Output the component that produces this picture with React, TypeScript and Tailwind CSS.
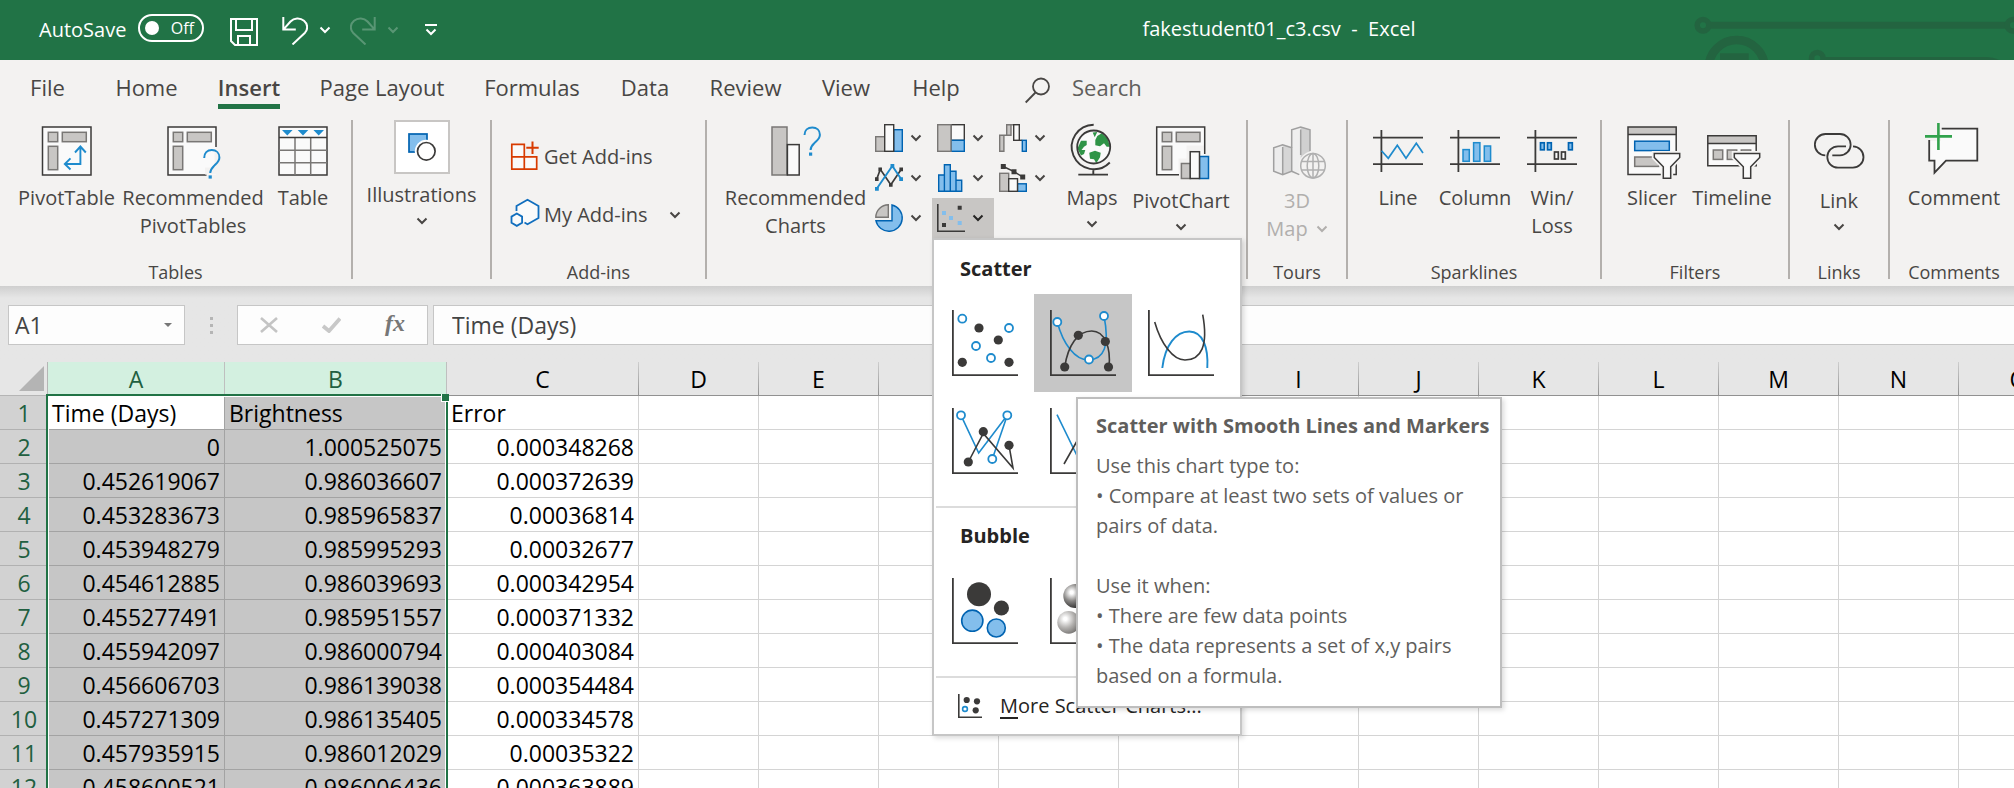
import type { ReactNode } from "react";

const INK = "#3b3a39";
const GREY = "#797775";
const GREY_FILL = "#c8c6c4";
const PAPER = "#fafafa";
const BLUE = "#1e8bcd";
const BLUE_LINE = "#0063b1";
const BLUE_FILL = "#83beec";
const RIBBON = "#f3f2f1";

function Chevron({ className = "" }: { className?: string }) {
  return (
    <svg className={`h-2 w-3 shrink-0 ${className}`} viewBox="0 0 12 8" fill="none" stroke="currentColor" strokeWidth="2" aria-hidden="true">
      <path d="M1.5 1.5L6 6l4.5-4.5" />
    </svg>
  );
}

function Large({ children }: { children: ReactNode }) {
  return (
    <svg className="h-14 w-14 shrink-0 overflow-visible" viewBox="0 0 56 56" fill="none" strokeWidth="1.5" aria-hidden="true">
      {children}
    </svg>
  );
}

function Small({ children }: { children: ReactNode }) {
  return (
    <svg className="h-7 w-7 shrink-0 overflow-visible" viewBox="0 0 28 28" fill="none" strokeWidth="1.4" aria-hidden="true">
      {children}
    </svg>
  );
}

function PivotTableIcon() {
  return (
    <Large>
      <rect x="3.5" y="1" width="48.5" height="48" fill={PAPER} stroke={INK} />
      <g fill={GREY_FILL} stroke={GREY}>
        <rect x="9.3" y="6.3" width="9.4" height="9.4" />
        <rect x="23.3" y="6.3" width="24" height="9.4" />
        <rect x="9.3" y="20.3" width="9.4" height="23.4" />
      </g>
      <path d="M41.4 21v17H26M36 26.5l5.4-6 5.4 6M31.5 32.3l-5.7 5.7 5.7 5.5" stroke={BLUE} strokeWidth="1.9" />
    </Large>
  );
}

function RecommendedPivotIcon() {
  return (
    <Large>
      <path d="M3 1h48v48H3z" fill={PAPER} />
      <path d="M41.5 49H3V1h48v20" stroke={INK} />
      <g fill={GREY_FILL} stroke={GREY}>
        <rect x="8.3" y="6.3" width="9.4" height="9.4" />
        <rect x="22.3" y="6.3" width="24" height="9.4" />
        <rect x="8.3" y="20.3" width="9.4" height="23.4" />
      </g>
      <path d="M40 45h13V26" stroke={RIBBON} strokeWidth="7" />
      <path d="M39.2 32c0-5 3-7.9 7.6-7.9 4.5 0 7.6 3 7.6 7.4 0 3.8-2.4 5.5-4.9 7.9-2.5 2.5-4.3 4-4.3 7.6" stroke={BLUE} strokeWidth="2" />
      <rect x="43.6" y="49.4" width="3.2" height="3.2" fill={BLUE} />
    </Large>
  );
}

function TableIcon() {
  return (
    <Large>
      <rect x="4" y="1" width="48" height="48" fill={PAPER} stroke={INK} />
      <path d="M4 24.3h48M4 36.7h48M20 12v37M35.7 12v37" stroke={GREY} />
      <path d="M4 11.5h48" stroke={INK} />
      <path d="M7 4h10.6l-5.3 5.5zM22.7 4h10.6L28 9.5zM38.4 4H49l-5.3 5.5z" fill={BLUE} />
    </Large>
  );
}

function RecommendedChartsIcon() {
  return (
    <Large>
      <rect x="4" y="1" width="15" height="48" fill={GREY_FILL} stroke={GREY} />
      <rect x="19.4" y="18.6" width="11.8" height="30.4" fill={PAPER} stroke={INK} />
      <path d="M36.5 9c0-4.6 3.3-7.4 7.8-7.4 4.4 0 7.6 2.8 7.6 7.2 0 3.8-2.5 5.4-5 7.8-2.4 2.3-4.3 3.7-4.3 7.4" stroke={BLUE} strokeWidth="2" />
      <rect x="41" y="26.5" width="3.2" height="3.2" fill={BLUE} />
    </Large>
  );
}

function GlobeIcon() {
  return (
    <Large>
      <circle cx="29.7" cy="21" r="16.5" fill={PAPER} />
      <g fill="#2f9447">
        <path d="M17 14.7h5.7V19L20 20.7 17.5 24h3.8L20 28l-3 1.5-3.5-7z" />
        <path d="M28.7 6.500l4.600-.4-2.600 5.200z" />
        <path d="M33.3 10l4.400-2.700 5.600 5 2.900 8.400h-3.500l-2.700-3.400-4 3-4.700-1V14z" />
        <path d="M25.3 26.700l5.700-2 5.700 2-.7 4.600-3.700 6-2.300-4-4-.6z" />
      </g>
      <circle cx="29.7" cy="21" r="16.5" stroke={INK} strokeWidth="1.8" />
      <path d="M29.7-1.2A22.2 22.2 0 1 0 45.8 36.500M29.300 43.400v5.200M14.300 48.600H44" stroke={INK} strokeWidth="1.9" />
    </Large>
  );
}

function PivotChartIcon() {
  return (
    <Large>
      <path d="M4 1h48v48H4z" fill={PAPER} />
      <path d="M28 57V35h8V22h20" stroke={RIBBON} strokeWidth="5" />
      <path d="M26 48.700H3.700V1h48v27" stroke={INK} />
      <g fill={GREY_FILL} stroke={GREY}>
        <rect x="9.3" y="6.3" width="9.4" height="9.4" />
        <rect x="23.3" y="6.3" width="23.7" height="9.4" />
        <rect x="9.3" y="20.3" width="9.4" height="23.4" />
      </g>
      <rect x="28.4" y="37.5" width="9" height="15" fill={GREY_FILL} stroke={GREY} />
      <rect x="46.5" y="30.5" width="9" height="22" fill={BLUE_FILL} stroke={BLUE_LINE} />
      <rect x="37.2" y="25.7" width="9.3" height="26.8" fill={PAPER} stroke={INK} />
    </Large>
  );
}

function Map3DIcon() {
  return (
    <Large>
      <path d="M22.7 3.700l9-2.700v44l-9 3z" fill="#efefef" />
      <path d="M31.7 1L41 3.700V30l-9.300 10z" fill="#d0d0d0" />
      <path d="M4.7 21.700l9-3v30l-9-3.400z" fill="#ececec" />
      <path d="M13.7 18.700l9 3v23.600l-9 3.400z" fill="#d6d6d6" />
      <g stroke="#a0a0a0">
        <path d="M22.7 21.700l-9-3-9 3v23.600l9 3.400 9-3.400zM13.700 21v27" />
        <path d="M22.7 21.700v-18L31.700 1 41 3.700V25M31.700 3.500V29M22.700 45.300l7.600 3.300" />
      </g>
      <circle cx="44" cy="39.7" r="14.5" fill={RIBBON} />
      <g stroke="#b0b0b0">
        <circle cx="44" cy="39.7" r="12.3" />
        <ellipse cx="44" cy="39.7" rx="5.8" ry="12.3" />
        <path d="M44 27.400V52M33 35.500h22M33 44h22" />
      </g>
    </Large>
  );
}

function SparkAxes() {
  return <path d="M3 11.600h50M3 38.100h50M11.400 4v42" stroke={INK} strokeWidth="1.8" />;
}

function SparkLineIcon() {
  return (
    <Large>
      <SparkAxes />
      <path d="M11.5 24.700l6.800 7.600 9-13L36 32.300l10.300-15L53 27" stroke={BLUE} strokeWidth="1.7" />
    </Large>
  );
}

function SparkColumnIcon() {
  return (
    <Large>
      <SparkAxes />
      <g fill={BLUE_FILL} stroke={BLUE}>
        <rect x="16" y="23.6" width="6.3" height="11.7" />
        <rect x="26.6" y="16.7" width="6.3" height="18.6" />
        <rect x="37.3" y="20" width="6.3" height="15.3" />
      </g>
    </Large>
  );
}

function SparkWinLossIcon() {
  return (
    <Large>
      <SparkAxes />
      <g fill={BLUE_FILL} stroke={BLUE_LINE} strokeWidth="1.7">
        <rect x="16.5" y="16.8" width="3.8" height="7" />
        <rect x="23.5" y="16.8" width="3.8" height="7" />
        <rect x="44.5" y="16.8" width="3.8" height="7" />
      </g>
      <g fill={PAPER} stroke={INK} strokeWidth="1.7">
        <rect x="30.5" y="26" width="3.8" height="7" />
        <rect x="37.5" y="26" width="3.8" height="7" />
      </g>
    </Large>
  );
}

function Funnel() {
  const d = "M30.3 27.400h25.400v4l-9 9.300v11.600h-7.400V40.700l-9-9.300z";
  return (
    <>
      <path d={d} stroke={RIBBON} strokeWidth="5" />
      <path d={d} fill={PAPER} stroke={INK} />
    </>
  );
}

function SlicerIcon() {
  return (
    <Large>
      <rect x="4" y="1" width="48.2" height="47.6" fill={PAPER} />
      <rect x="4" y="1" width="48.2" height="7.4" fill={GREY_FILL} />
      <path d="M4 8.400h48.200M4 1h48.200v47.600H4z" stroke={INK} />
      <rect x="10.7" y="15.2" width="34.6" height="9.4" fill={BLUE_FILL} stroke={BLUE_LINE} />
      <rect x="10.7" y="31" width="24" height="9.4" fill={GREY_FILL} stroke={GREY} />
      <Funnel />
    </Large>
  );
}

function TimelineIcon() {
  return (
    <Large>
      <rect x="3.8" y="9.8" width="48.4" height="30" fill={PAPER} />
      <rect x="3.8" y="9.8" width="48.4" height="7.6" fill={GREY_FILL} />
      <path d="M3.8 17.400h48.400M3.800 9.800h48.400v30H3.800z" stroke={INK} />
      <g fill={GREY_FILL} stroke={GREY}>
        <rect x="9.3" y="24" width="9.4" height="9.4" />
        <rect x="23.3" y="24" width="9.4" height="9.4" />
        <rect x="37.3" y="24" width="9.4" height="9.4" />
      </g>
      <Funnel />
    </Large>
  );
}

function LinkIcon() {
  return (
    <Large>
      <path
        d="M21.3 29.300H29A10.650 10.650 0 0 0 29 8H14.700A10.650 10.650 0 0 0 14.300 29.300M35 20.300h-8a10.700 10.700 0 0 0 0 21.400h14.600a10.700 10.700 0 0 0 .4-21.400"
        stroke={INK}
        strokeWidth="1.8"
      />
    </Large>
  );
}

function CommentIcon() {
  return (
    <Large>
      <path d="M3 2.700h48.300v32H20l-11.700 12v-12H3z" fill={PAPER} />
      <path d="M0 0h15v15H0z" fill={RIBBON} />
      <path d="M15.7 2.700h35.600v32H20l-11.500 12v-12H3.200V14" stroke={INK} strokeWidth="1.8" />
      <path d="M12.4-3v27M-1 10.400h27" stroke="#31a24c" strokeWidth="2.6" />
    </Large>
  );
}

function ColumnChartIcon() {
  return (
    <Small>
      <rect x=".7" y="12.7" width="9" height="14.6" fill={GREY_FILL} stroke={GREY} />
      <rect x="18.8" y="5.7" width="8.5" height="21.6" fill={BLUE_FILL} stroke={BLUE_LINE} />
      <rect x="9.7" y=".7" width="9" height="26.6" fill={PAPER} stroke={INK} />
    </Small>
  );
}

function TreemapIcon() {
  return (
    <Small>
      <rect x="14" y=".7" width="13.3" height="15.6" fill={PAPER} stroke={INK} />
      <rect x="14" y="16.3" width="13.3" height="11" fill={BLUE_FILL} stroke={BLUE_LINE} />
      <rect x=".7" y=".7" width="13.3" height="26.6" fill={GREY_FILL} stroke={GREY} />
    </Small>
  );
}

function WaterfallIcon() {
  return (
    <Small>
      <g fill={GREY_FILL} stroke={GREY}>
        <path d="M.7 11.300h4.200v16H.7zM7.700.7H12v10.600H7.700zM5 11.300h3M12 .7h3" />
      </g>
      <path d="M20.3 16.300h3" stroke={INK} />
      <rect x="14.7" y=".7" width="5.6" height="15.6" fill={PAPER} stroke={INK} />
      <rect x="23.3" y="16.3" width="4" height="11" fill={BLUE_FILL} stroke={BLUE_LINE} />
    </Small>
  );
}

function LineChartIcon() {
  return (
    <Small>
      <path d="M1.7 15.300L5.300 5.300l10.500 15.500L26.300 5.300" stroke={INK} strokeWidth="1.7" />
      <path d="M0 13.300h3.600v3.800H0zM3.400 3.600H7v3.600H3.400zM14 19.200h3.600v3.600H14zM24.400 3.600H28v3.600h-3.600z" fill={INK} />
      <path d="M1.7 24.700L17.300 2l9 13.300" stroke={BLUE} strokeWidth="1.9" />
      <path d="M0 23h3.800v3.800H0zM15.500 0h3.800v3.800h-3.800zM24.200 13.300H28v3.800h-3.800z" fill={BLUE} />
    </Small>
  );
}

function HistogramIcon() {
  return (
    <Small>
      <g fill={BLUE_FILL} stroke={BLUE_LINE}>
        <path d="M1.7 11h5.700v16.300H1.700zM7.400.7h5.900v26.600H7.400zM13.300 7.300H19v20h-5.700zM19 16.300h5.700v11H19z" />
      </g>
    </Small>
  );
}

function ComboIcon() {
  return (
    <Small>
      <rect x=".7" y="9.3" width="9" height="18" fill={GREY_FILL} stroke={GREY} />
      <rect x="18.5" y="19.8" width="8.8" height="7.5" fill={BLUE_FILL} stroke={BLUE_LINE} />
      <rect x="9.7" y="14.7" width="8.8" height="12.6" fill={PAPER} stroke={INK} />
      <path d="M4.3 2.500L15 7.700l8.700 5.300" stroke={INK} />
      <path d="M1.8 0h5v5h-5zM12.500 5.200h5v5h-5zM21.200 10.500h5v5h-5z" fill={INK} />
    </Small>
  );
}

function PieIcon() {
  return (
    <Small>
      <path d="M17 1A13.300 13.300 0 1 1 .9 16.700H17z" fill={BLUE_FILL} stroke={BLUE_LINE} />
      <path d="M13.3.8A12.600 12.600 0 0 0 .8 13.300h12.500z" fill={GREY_FILL} stroke={GREY} />
    </Small>
  );
}

function ScatterIcon() {
  return (
    <Small>
      <path d="M.8 0v27.200H28" stroke={INK} strokeWidth="1.6" />
      <path d="M20.700 1.700h4v4h-4zM5 19h4v4H5z" fill={INK} />
      <path d="M5 7h4v4H5zM12 12h4v4h-4zM20.700 17h4v4h-4z" fill={BLUE_FILL} />
    </Small>
  );
}

function RibbonButton({
  icon,
  lines,
  width,
  low = false,
  menu = false,
}: {
  icon: ReactNode;
  lines: string[];
  width: string;
  low?: boolean;
  menu?: boolean;
}) {
  return (
    <button type="button" className={`flex flex-col items-center pt-2 ${width}`}>
      {icon}
      <span className={`block text-center leading-7 ${low ? "mt-[5px]" : "mt-0.5"}`}>
        {lines.map((line) => (
          <span key={line} className="block whitespace-nowrap">
            {line}
          </span>
        ))}
      </span>
      {menu && <Chevron className="mt-2" />}
    </button>
  );
}

function Group({ label, className, children }: { label: string; className: string; children: ReactNode }) {
  return (
    <section aria-label={label || "Illustrations"} className={`flex shrink-0 flex-col ${className}`}>
      <div className="flex h-[142px] items-start">{children}</div>
      <div className="h-6 text-center text-lg leading-6">{label}</div>
    </section>
  );
}

function Divider() {
  return <div className="mt-0.5 h-[159px] w-0.5 shrink-0 bg-[#b3b0ad]" />;
}

function GalleryAxes({ children }: { children: ReactNode }) {
  return (
    <svg className="h-[66px] w-[66px] overflow-visible" viewBox="0 0 66 66" fill="none" strokeWidth="1.6" aria-hidden="true">
      <path d="M.9 0v65.200H66" stroke={INK} strokeWidth="1.8" />
      {children}
    </svg>
  );
}

function Dots({ points, open = false }: { points: [number, number][]; open?: boolean }) {
  return (
    <>
      {points.map(([x, y]) => (
        <circle key={`${x}-${y}`} cx={x} cy={y} r={open ? 4 : 4.6} fill={open ? "#fff" : INK} stroke={open ? BLUE : "none"} strokeWidth="1.8" />
      ))}
    </>
  );
}

function Tile({ label, selected = false, children }: { label: string; selected?: boolean; children: ReactNode }) {
  return (
    <button type="button" aria-label={label} className={`h-[98px] w-[98px] p-4 ${selected ? "bg-[#c6c6c6]" : ""}`}>
      <GalleryAxes>{children}</GalleryAxes>
    </button>
  );
}

function Tooltip() {
  return (
    <div
      role="tooltip"
      className="absolute top-[103px] left-[42px] z-30 w-[426px] border-2 border-[#bebebe] bg-white px-[18px] pt-3 pb-[15px] text-left leading-[30px] text-[#605e5c] shadow-[2px_2px_5px_rgba(0,0,0,0.15)]"
    >
      <h3 className="mb-2.5 font-bold whitespace-nowrap">Scatter with Smooth Lines and Markers</h3>
      <p>Use this chart type to:</p>
      <p>
        • Compare at least two sets of values or
        <br />
        pairs of data.
      </p>
      <p className="mt-[30px]">Use it when:</p>
      <p>• There are few data points</p>
      <p>
        • The data represents a set of x,y pairs
        <br />
        based on a formula.
      </p>
    </div>
  );
}

function ScatterMenu() {
  return (
    <div className="absolute top-full left-0 z-20 w-[310px] border-2 border-[#c6c6c6] bg-white text-left text-[#252423] shadow-[2px_2px_5px_rgba(0,0,0,0.15)]">
      <h2 className="mt-[15px] mb-[11px] pl-[26px] leading-7 font-bold">Scatter</h2>
      <div className="grid grid-cols-[98px_98px_98px] pb-4 pl-0.5">
        <Tile label="Scatter">
          <Dots open points={[[10.3, 8.7], [57, 18], [24, 36], [39, 48]]} />
          <Dots points={[[27, 18], [46.3, 30], [10.3, 52.3], [57, 52.3]]} />
        </Tile>
        <div className="relative">
          <Tile label="Scatter with Smooth Lines and Markers" selected>
            <path d="M7.3 12C13 34 25 50 38.500 50 54 49.500 60 36 54 6" stroke={BLUE} />
            <path d="M14.7 57C18 35 28 21 41.700 21 55 21 61 38 59 57" stroke={INK} />
            <Dots open points={[[7.3, 12], [39, 49.5], [54, 6]]} />
            <Dots points={[[14.7, 57], [28.3, 25.3], [55.3, 31.5], [58.5, 57]]} />
          </Tile>
          <Tooltip />
        </div>
        <Tile label="Scatter with Smooth Lines">
          <path d="M14.3 58C17 35 28 21.500 41.300 21.500 55 21.500 60.500 38 59.300 58" stroke={BLUE} strokeWidth="1.9" />
          <path d="M6.7 12C13 34 25 50 37 50 53 50 60.500 36 54.700 4.700" stroke={INK} />
        </Tile>
        <Tile label="Scatter with Straight Lines and Markers">
          <path d="M9 7.300L26.700 45 55.300 7.300l-15 43.700" stroke={BLUE} />
          <path d="M16.3 54l15-28.500L61 60l-4-22.700" stroke={INK} />
          <Dots open points={[[9, 7.3], [55.3, 7.3], [40.3, 51]]} />
          <Dots points={[[16.3, 54], [31.3, 23.7], [57, 37.3]]} />
        </Tile>
        <Tile label="Scatter with Straight Lines">
          <path d="M7 6.700L26.700 47 55 9" stroke={BLUE} />
          <path d="M14 56l17-30 28 32" stroke={INK} />
        </Tile>
      </div>
      <hr className="ml-0.5 h-0.5 border-0 bg-[#dcdcdc]" />
      <h2 className="mt-3.5 mb-3 pl-[26px] leading-7 font-bold">Bubble</h2>
      <div className="flex pb-4 pl-0.5">
        <Tile label="Bubble">
          <circle cx="27" cy="16.3" r="12" fill={INK} />
          <circle cx="49.4" cy="30" r="7.6" fill={INK} />
          <circle cx="20.3" cy="42.7" r="10.6" fill={BLUE_FILL} stroke={BLUE_LINE} />
          <circle cx="44.3" cy="50" r="9" fill={BLUE_FILL} stroke={BLUE_LINE} />
        </Tile>
        <Tile label="3-D Bubble">
          <defs>
            <radialGradient id="sphere-dark" cx=".35" cy=".35" r=".65">
              <stop offset=".1" stopColor="#fff" />
              <stop offset=".55" stopColor="#8a8886" />
              <stop offset="1" stopColor={INK} />
            </radialGradient>
            <radialGradient id="sphere-grey" cx=".35" cy=".35" r=".7">
              <stop offset=".1" stopColor="#fff" />
              <stop offset=".55" stopColor="#b5b3b1" />
              <stop offset="1" stopColor={GREY} />
            </radialGradient>
          </defs>
          <circle cx="25.3" cy="18" r="12" fill="url(#sphere-dark)" />
          <circle cx="18.7" cy="44.3" r="11.4" fill="url(#sphere-grey)" />
        </Tile>
      </div>
      <hr className="ml-0.5 h-0.5 border-0 bg-[#dcdcdc]" />
      <button type="button" className="flex h-14 w-full items-center gap-[18px] pl-6">
        <svg className="h-6 w-6" viewBox="0 0 24 24" fill="none" aria-hidden="true">
          <path d="M.8 0v23.200H24" stroke={INK} strokeWidth="1.6" />
          <circle cx="8.7" cy="6" r="3.1" fill={INK} />
          <circle cx="19" cy="7.3" r="3.1" fill={INK} />
          <circle cx="17.7" cy="16.3" r="3.1" fill={INK} />
          <circle cx="7" cy="15" r="2.4" fill="#fff" stroke={BLUE} strokeWidth="1.6" />
        </svg>
        <span className="whitespace-nowrap">
          <span className="underline underline-offset-4">M</span>ore Scatter Charts...
        </span>
      </button>
    </div>
  );
}

const chartTypes: { label: string; icon: ReactNode }[] = [
  { label: "Column or Bar Chart", icon: <ColumnChartIcon /> },
  { label: "Hierarchy Chart", icon: <TreemapIcon /> },
  { label: "Waterfall Chart", icon: <WaterfallIcon /> },
  { label: "Line or Area Chart", icon: <LineChartIcon /> },
  { label: "Statistic Chart", icon: <HistogramIcon /> },
  { label: "Combo Chart", icon: <ComboIcon /> },
  { label: "Pie or Doughnut Chart", icon: <PieIcon /> },
  { label: "Scatter or Bubble Chart", icon: <ScatterIcon /> },
];

function ChartTypes() {
  return (
    <div className="grid grid-cols-[62px_62px_62px]">
      {chartTypes.map(({ label, icon }) => {
        const open = label.startsWith("Scatter");
        return (
          <div key={label} className="relative h-10">
            <button
              type="button"
              aria-label={label}
              aria-expanded={open}
              className={`flex h-10 w-full items-center gap-[7px] pl-[5px] ${open ? "bg-[#c8c6c4] text-[#252423]" : ""}`}
            >
              {icon}
              <Chevron />
            </button>
            {open && <ScatterMenu />}
          </div>
        );
      })}
    </div>
  );
}

function TitleBar() {
  return (
    <header className="relative flex h-[60px] items-center overflow-hidden bg-[#217346] text-white">
      <svg className="absolute top-0 right-0 h-[60px] w-80" viewBox="0 0 320 60" fill="none" stroke="#236440" aria-hidden="true">
        <circle cx="9" cy="25.3" r="5.8" strokeWidth="5.5" />
        <path d="M16 25.300h296" strokeWidth="7" />
        <circle cx="319" cy="25.3" r="5.8" strokeWidth="5.5" />
        <circle cx="42.7" cy="68" r="28" strokeWidth="8.5" />
        <path d="M26 53.300h28.700V60H26z" fill="#236440" stroke="none" />
        <circle cx="123.3" cy="58.3" r="5.8" strokeWidth="5.5" />
        <path d="M131 57h160q10 0 16 4v3H131z" fill="#236440" stroke="none" />
      </svg>
      <div className="flex h-full w-[448px] shrink-0 items-center pl-[39px]">
        <span id="autosave" className="w-[99px] leading-7">
          AutoSave
        </span>
        <button
          type="button"
          role="switch"
          aria-checked="false"
          aria-labelledby="autosave"
          className="-mt-1 flex h-7 w-[66px] items-center justify-between rounded-full border-2 border-white pr-2 pl-[5px] text-base leading-6"
        >
          <span className="h-3.5 w-3.5 rounded-full bg-white" />
          Off
        </button>
        <button type="button" aria-label="Save" className="ml-[26px] pt-1">
          <svg className="h-7 w-7" viewBox="0 0 28 28" fill="none" stroke="#fff" strokeWidth="2" aria-hidden="true">
            <path d="M1 1h26v26H5l-4-4zM6 1v11h16V1M8 27v-9h12v9" />
          </svg>
        </button>
        <button type="button" aria-label="Undo" className="ml-6 pt-0.5">
          <svg className="h-7 w-[26px]" viewBox="0 0 26 28" fill="none" stroke="#fff" strokeWidth="2" aria-hidden="true">
            <path d="M1.3 0v12.500h12.500M1.500 12.300L8.500 4.500C12 .7 18 .3 22 3.700s4 8.700 1 12L10.500 27.500" />
          </svg>
        </button>
        <button type="button" aria-label="Undo history" className="ml-[11px]">
          <Chevron />
        </button>
        <button type="button" aria-label="Redo" className="ml-[19px] pt-0.5 opacity-25">
          <svg className="h-7 w-[26px]" viewBox="0 0 26 28" fill="none" stroke="#fff" strokeWidth="2" aria-hidden="true">
            <path d="M24.7 0v12.500H12.200M24.500 12.300L17.500 4.500C14 .7 8 .3 4 3.700s-4 8.700-1 12L15.500 27.500" />
          </svg>
        </button>
        <button type="button" aria-label="Redo history" className="ml-[11px] opacity-25">
          <Chevron />
        </button>
        <button type="button" aria-label="Customize Quick Access Toolbar" className="ml-[26px]">
          <svg className="h-3 w-3" viewBox="0 0 12 12" fill="none" stroke="#fff" strokeWidth="2" aria-hidden="true">
            <path d="M0 1h12M1.500 5.500L6 10l4.500-4.500" />
          </svg>
        </button>
      </div>
      <h1 className="ml-24 flex-1 pb-0.5 text-center leading-7 whitespace-pre">fakestudent01_c3.csv  -  Excel</h1>
    </header>
  );
}

const tabs: { name: string; width: string }[] = [
  { name: "File", width: "w-[95px]" },
  { name: "Home", width: "w-[103px]" },
  { name: "Insert", width: "w-[102px]" },
  { name: "Page Layout", width: "w-[164px]" },
  { name: "Formulas", width: "w-[136px]" },
  { name: "Data", width: "w-[90px]" },
  { name: "Review", width: "w-[111px]" },
  { name: "View", width: "w-[90px]" },
  { name: "Help", width: "w-[90px]" },
];

function Tabs() {
  return (
    <nav className="flex h-[58px] items-start pt-[11px] text-[22px] leading-8">
      {tabs.map(({ name, width }) => (
        <button key={name} type="button" className={`flex shrink-0 justify-center ${width}`}>
          {name === "Insert" ? (
            <span className="border-b-[5px] border-[#217346] pb-px font-semibold">{name}</span>
          ) : (
            <span className="whitespace-nowrap">{name}</span>
          )}
        </button>
      ))}
      <div className="ml-11 flex items-start">
        <svg className="mt-1.5 h-7 w-[26px]" viewBox="0 0 26 28" fill="none" stroke="#484644" strokeWidth="1.8" aria-hidden="true">
          <circle cx="16" cy="9.5" r="8" />
          <path d="M10.5 15.500L.7 25.500" />
        </svg>
        <input
          type="text"
          role="searchbox"
          aria-label="Search"
          placeholder="Search"
          className="ml-[21px] h-8 w-44 bg-transparent outline-none placeholder:text-[#605e5c]"
        />
      </div>
    </nav>
  );
}

function Ribbon() {
  return (
    <div className="flex h-[168px]">
      <Group label="Tables" className="w-[351px]">
        <div className="w-4 shrink-0" />
        <RibbonButton icon={<PivotTableIcon />} lines={["PivotTable"]} width="w-[101px]" />
        <RibbonButton icon={<RecommendedPivotIcon />} lines={["Recommended", "PivotTables"]} width="w-[152px]" />
        <RibbonButton icon={<TableIcon />} lines={["Table"]} width="w-[68px]" />
      </Group>
      <Divider />
      <Group label="" className="w-[137px]">
        <button type="button" className="flex w-full flex-col items-center pt-0.5">
          <svg className="h-[54px] w-14 border-2 border-[#c8c6c4] bg-white" viewBox="0 0 52 50" fill="none" strokeWidth="1.7" aria-hidden="true">
            <rect x="13" y="12" width="18" height="18" fill={BLUE_FILL} stroke={BLUE_LINE} />
            <circle cx="30.3" cy="29.3" r="11.5" fill="#fff" />
            <circle cx="30.3" cy="29.3" r="8.8" fill="#fff" stroke={INK} />
          </svg>
          <span className="mt-[7px] leading-7">Illustrations</span>
          <Chevron className="mt-2" />
        </button>
      </Group>
      <Divider />
      <Group label="Add-ins" className="w-[213px]">
        <div className="flex w-full flex-col gap-[30px] pt-[25px] pl-[19px]">
          <button type="button" className="flex h-7 items-center gap-[5px] leading-7">
            <Small>
              <g fill={PAPER} stroke="#d83b01" strokeWidth="1.7">
                <path d="M.8 1.300h12.500v12.500H.8zM.8 13.800h12.500v12.400H.8zM13.300 13.800h12.400v12.400H13.300z" />
                <path d="M21.5-1.500v12.400M15.300 4.700h12.400" strokeWidth="2" />
              </g>
            </Small>
            Get Add-ins
          </button>
          <button type="button" className="flex h-7 items-center gap-[5px] leading-7">
            <Small>
              <g fill={PAPER} stroke="#106ebe" strokeWidth="1.8">
                <path d="M5.5 10V5l11-6.300 11 6.300v12l-11 6.200-3-1.700" />
                <path d="M5.8 12.500l5.300 3.100v6.200l-5.300 3.100-5.300-3.100v-6.200z" />
              </g>
            </Small>
            My Add-ins
            <Chevron className="ml-4" />
          </button>
        </div>
      </Group>
      <Divider />
      <Group label="" className="w-[539px]">
        <div className="w-3.5 shrink-0" />
        <RibbonButton icon={<RecommendedChartsIcon />} lines={["Recommended", "Charts"]} width="w-[149px]" />
        <ChartTypes />
        <RibbonButton icon={<GlobeIcon />} lines={["Maps"]} width="w-[72px]" menu />
        <RibbonButton icon={<PivotChartIcon />} lines={["PivotChart"]} width="w-[106px]" low menu />
      </Group>
      <Divider />
      <Group label="Tours" className="w-[98px]">
        <button type="button" disabled className="flex w-full flex-col items-center pt-2 text-[#b1afad]">
          <Map3DIcon />
          <span className="mt-[5px] block leading-7">3D</span>
          <span className="flex items-center gap-2 leading-7">
            Map <Chevron />
          </span>
        </button>
      </Group>
      <Divider />
      <Group label="Sparklines" className="w-[252px]">
        <div className="w-3.5 shrink-0" />
        <RibbonButton icon={<SparkLineIcon />} lines={["Line"]} width="w-[72px]" />
        <RibbonButton icon={<SparkColumnIcon />} lines={["Column"]} width="w-[82px]" />
        <RibbonButton icon={<SparkWinLossIcon />} lines={["Win/", "Loss"]} width="w-[72px]" />
      </Group>
      <Divider />
      <Group label="Filters" className="w-[186px]">
        <div className="w-3.5 shrink-0" />
        <RibbonButton icon={<SlicerIcon />} lines={["Slicer"]} width="w-[72px]" />
        <RibbonButton icon={<TimelineIcon />} lines={["Timeline"]} width="w-[88px]" />
      </Group>
      <Divider />
      <Group label="Links" className="w-[98px]">
        <RibbonButton icon={<LinkIcon />} lines={["Link"]} width="w-full" low menu />
      </Group>
      <Divider />
      <Group label="Comments" className="grow pl-1">
        <RibbonButton icon={<CommentIcon />} lines={["Comment"]} width="w-full" />
      </Group>
    </div>
  );
}

function FormulaBar() {
  return (
    <div className="flex h-[76px] items-start bg-linear-to-b from-[#cfcfcf] to-[#e6e6e6] to-[12px] pt-[19px] pl-2 text-[23px] text-[#444444]">
      <div className="flex h-10 w-[177px] items-center border border-[#c6c6c6] bg-[#fdfdfd] pr-3 pl-1.5">
        <input aria-label="Name Box" defaultValue="A1" className="h-9 w-0 flex-1 bg-transparent outline-none" />
        <button type="button" aria-label="Open Name Box">
          <svg className="h-1 w-2" viewBox="0 0 8 4" fill="#777" aria-hidden="true">
            <path d="M0 0h8L4 4z" />
          </svg>
        </button>
      </div>
      <div className="flex h-10 w-[52px] flex-col items-center justify-center gap-1">
        <span className="h-[3px] w-[3px] bg-[#b5b5b5]" />
        <span className="h-[3px] w-[3px] bg-[#b5b5b5]" />
        <span className="h-[3px] w-[3px] bg-[#b5b5b5]" />
      </div>
      <div className="flex h-10 w-[191px] items-center justify-around border border-[#c6c6c6] bg-[#fdfdfd]">
        <button type="button" aria-label="Cancel">
          <svg className="h-4 w-[18px]" viewBox="0 0 18 16" fill="none" stroke="#c4c4c4" strokeWidth="2.6" aria-hidden="true">
            <path d="M1 1l16 14M17 1L1 15" />
          </svg>
        </button>
        <button type="button" aria-label="Enter">
          <svg className="h-4 w-[19px]" viewBox="0 0 19 16" fill="none" stroke="#c8c8c8" strokeWidth="3.8" aria-hidden="true">
            <path d="M1 9l6 5L18 1.500" />
          </svg>
        </button>
        <button type="button" aria-label="Insert Function" className="pb-1 font-['Liberation_Serif',serif] text-2xl leading-7 font-bold text-[#777777] italic">
          fx
        </button>
      </div>
      <input
        aria-label="Formula Bar"
        defaultValue="Time (Days)"
        className="ml-[5px] h-10 w-0 flex-1 border border-r-0 border-[#c6c6c6] bg-[#fdfdfd] pl-[18px] outline-none"
      />
    </div>
  );
}

const columns = ["A", "B", "C", "D", "E", "F", "G", "H", "I", "J", "K", "L", "M", "N", "O"];

const rows: [string, string, string][] = [
  ["Time (Days)", "Brightness", "Error"],
  ["0", "1.000525075", "0.000348268"],
  ["0.452619067", "0.986036607", "0.000372639"],
  ["0.453283673", "0.985965837", "0.00036814"],
  ["0.453948279", "0.985995293", "0.00032677"],
  ["0.454612885", "0.986039693", "0.000342954"],
  ["0.455277491", "0.985951557", "0.000371332"],
  ["0.455942097", "0.986000794", "0.000403084"],
  ["0.456606703", "0.986139038", "0.000354484"],
  ["0.457271309", "0.986135405", "0.000334578"],
  ["0.457935915", "0.986012029", "0.00035322"],
  ["0.458600521", "0.986006436", "0.000363889"],
];

function cellTone(row: number, column: number) {
  if (row === 0 && column === 0) return "bg-white border-[#a3a3a3]";
  return column < 2 ? "bg-[#c6c6c6] border-[#a3a3a3]" : "border-[#d4d4d4]";
}

function Sheet() {
  return (
    <main className="relative flex-1 overflow-hidden bg-white text-[23px] leading-8 text-black">
      <table className="w-[2079px] table-fixed border-separate border-spacing-0">
        <colgroup>
          <col className="w-12" />
          <col className="w-[177px]" />
          <col className="w-[222px]" />
          <col className="w-[192px]" />
          {columns.slice(3).map((name) => (
            <col key={name} className="w-[120px]" />
          ))}
        </colgroup>
        <thead>
          <tr className="h-[34px] bg-[#e6e6e6]">
            <td className="border-r border-b border-[#b5b5b5] p-0">
              <svg className="ml-auto mr-[3px] h-[25px] w-[25px]" viewBox="0 0 25 25" fill="#b4b4b4" aria-hidden="true">
                <path d="M25 0v25H0z" />
              </svg>
            </td>
            {columns.map((name, index) => (
              <th
                key={name}
                scope="col"
                className={`border-r border-b p-0 font-normal ${
                  index < 2 ? "border-[#bfbfbf] bg-[#d3f0e0] text-[#215f40]" : "[border-image:linear-gradient(#d0d0d0,#909090)_1]"
                }`}
              >
                {name}
              </th>
            ))}
          </tr>
        </thead>
        <tbody>
          {rows.map((row, r) => (
            <tr key={r} className="h-[34px]">
              <th scope="row" className="border-b border-[#b1b1b1] bg-[#d2d2d2] p-0 font-normal text-[#215f40]">
                {r + 1}
              </th>
              {columns.map((name, c) => (
                <td key={name} className={`border-r border-b px-1 py-0 whitespace-nowrap ${r === 0 ? "text-left" : "text-right"} ${cellTone(r, c)}`}>
                  {row[c] ?? ""}
                </td>
              ))}
            </tr>
          ))}
        </tbody>
      </table>
      <div className="pointer-events-none absolute top-8 -bottom-4 left-[46px] w-[402px] border-2 border-[#217346]">
        <div className="h-full border border-white" />
        <div className="absolute -top-0.5 -right-[3px] h-2 w-2 border-b border-l border-white bg-[#217346]" />
      </div>
    </main>
  );
}

export default function App() {
  return (
    <div className="flex h-screen flex-col overflow-hidden bg-[#f3f2f1] font-['Open_Sans',sans-serif] text-xl text-[#484644]">
      <TitleBar />
      <Tabs />
      <Ribbon />
      <FormulaBar />
      <Sheet />
    </div>
  );
}
